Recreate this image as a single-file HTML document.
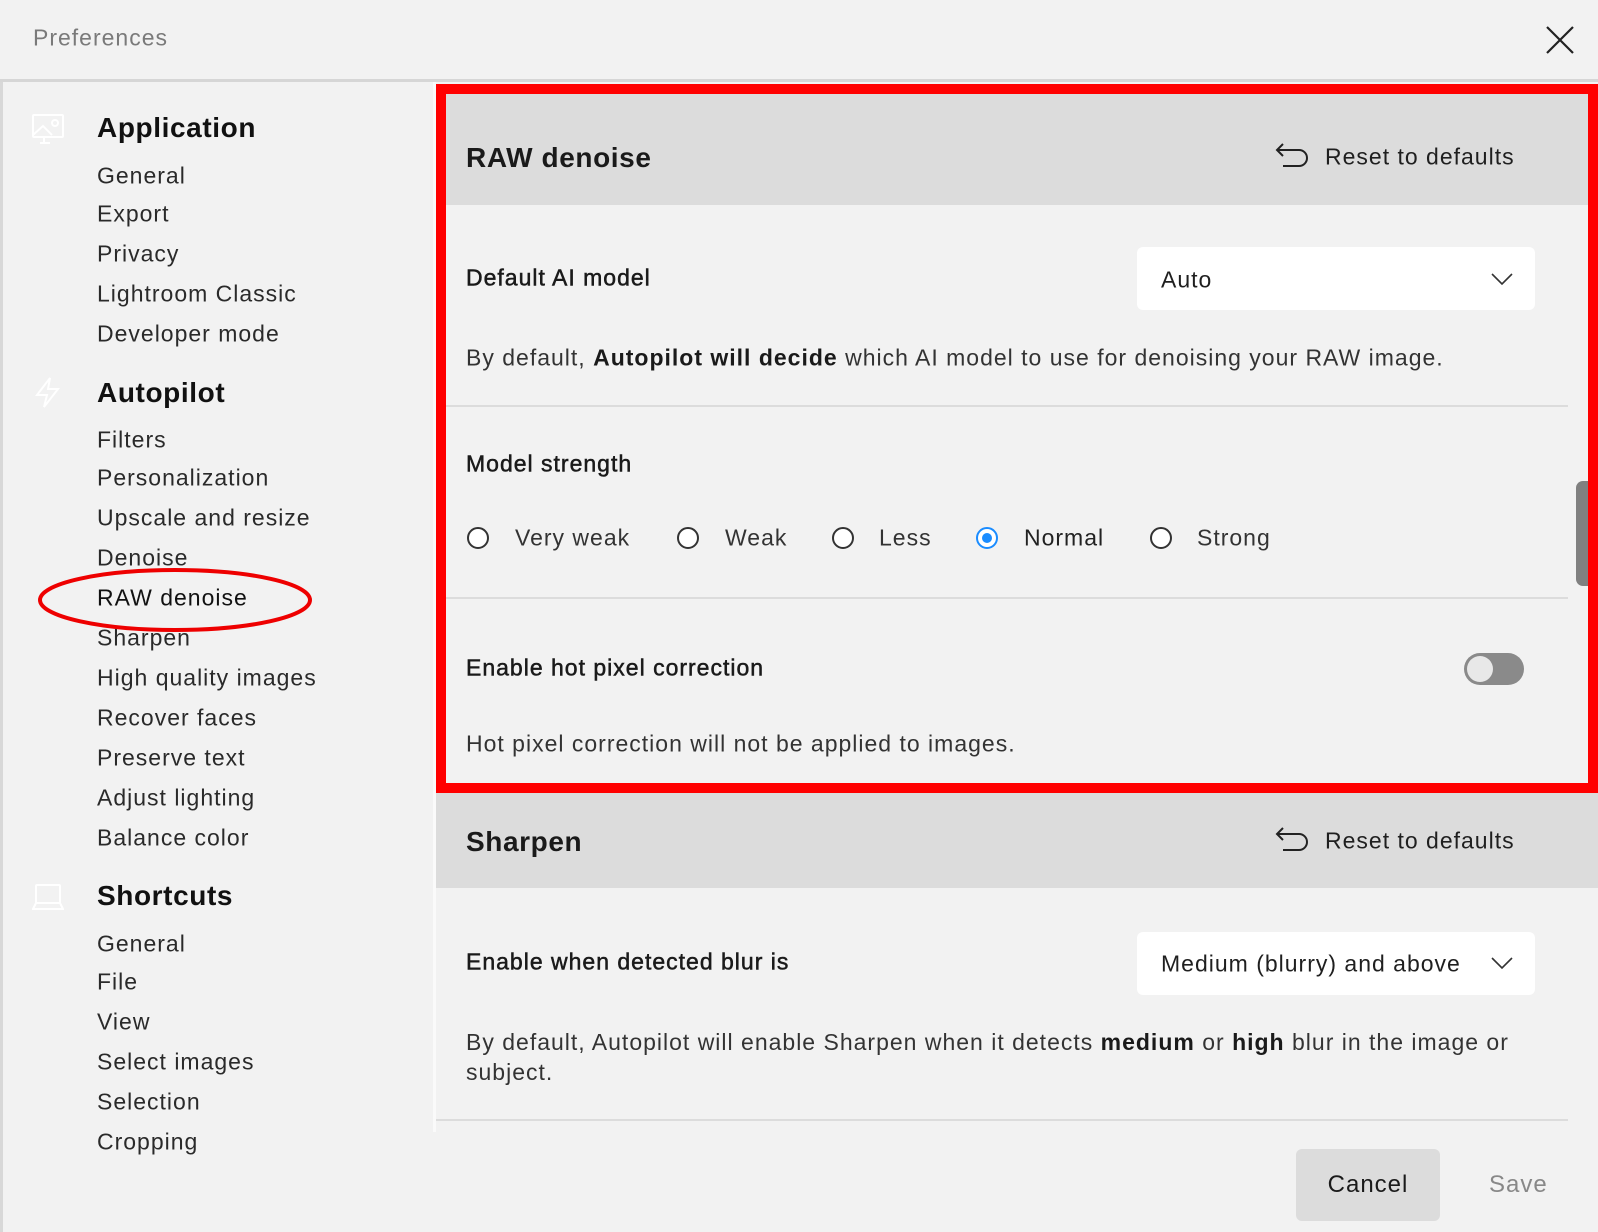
<!DOCTYPE html>
<html><head><meta charset="utf-8"><style>
*{margin:0;padding:0;box-sizing:border-box}
body{width:1598px;height:1232px;background:#f2f2f2;font-family:"Liberation Sans",sans-serif;color:#1f1f1f;position:relative;overflow:hidden;letter-spacing:1px}
.a{position:absolute;white-space:nowrap}
.t{transform:translateY(-50%)}
.side{font-size:23px;color:#2a2a2a;left:97px}
.h{font-size:28px;font-weight:bold;left:97px;color:#111;letter-spacing:0.6px}
.lab{font-size:23px;color:#1a1a1a;left:466px;-webkit-text-stroke:0.5px #1a1a1a}
.d{font-size:23px;color:#333;left:466px}
.sec{font-size:28px;font-weight:bold;color:#1a1a1a;letter-spacing:0.6px}
.rad{width:22px;height:22px;border:2px solid #333;border-radius:50%;background:#fff}
</style></head><body>
<div class="a t" style="left:33px;top:38px;font-size:23px;color:#7a7a7a">Preferences</div>
<svg class="a" style="left:1545px;top:25px" width="30" height="30"><path d="M2 2L28 28M28 2L2 28" stroke="#222" stroke-width="2.2"/></svg>
<div class="a" style="left:0;top:79px;width:1598px;height:3px;background:#d6d6d6"></div>
<div class="a" style="left:0;top:82px;width:3px;height:1150px;background:#d8d8d8"></div>
<div class="a" style="left:433px;top:82px;width:3px;height:1050px;background:#fafafa"></div>

<svg class="a" style="left:32px;top:114px" width="34" height="32" fill="none" stroke="#fff" stroke-width="2"><rect x="1" y="1" width="30" height="22" rx="1"/><circle cx="23" cy="9" r="3"/><path d="M1 21l10-9 9 9M12 23v5M8 29h10"/></svg>
<svg class="a" style="left:34px;top:376px" width="28" height="32" fill="none" stroke="#fff" stroke-width="2"><path d="M16 2L3 19h10l-3 12 14-18H14z"/></svg>
<svg class="a" style="left:32px;top:883px" width="32" height="28" fill="none" stroke="#fff" stroke-width="2"><rect x="4" y="2" width="24" height="18" rx="1"/><path d="M4 20L1 26h30l-3-6"/></svg>

<div class="a t h" style="top:128px">Application</div>
<div class="a t side" style="top:176px">General</div>
<div class="a t side" style="top:214px">Export</div>
<div class="a t side" style="top:254px">Privacy</div>
<div class="a t side" style="top:294px">Lightroom Classic</div>
<div class="a t side" style="top:334px">Developer mode</div>
<div class="a t h" style="top:393px">Autopilot</div>
<div class="a t side" style="top:440px">Filters</div>
<div class="a t side" style="top:478px">Personalization</div>
<div class="a t side" style="top:518px">Upscale and resize</div>
<div class="a t side" style="top:558px">Denoise</div>
<div class="a t side" style="top:598px;color:#111">RAW denoise</div>
<div class="a t side" style="top:638px">Sharpen</div>
<div class="a t side" style="top:678px">High quality images</div>
<div class="a t side" style="top:718px">Recover faces</div>
<div class="a t side" style="top:758px">Preserve text</div>
<div class="a t side" style="top:798px">Adjust lighting</div>
<div class="a t side" style="top:838px">Balance color</div>
<div class="a t h" style="top:896px">Shortcuts</div>
<div class="a t side" style="top:944px">General</div>
<div class="a t side" style="top:982px">File</div>
<div class="a t side" style="top:1022px">View</div>
<div class="a t side" style="top:1062px">Select images</div>
<div class="a t side" style="top:1102px">Selection</div>
<div class="a t side" style="top:1142px">Cropping</div>
<svg class="a" style="left:36px;top:566px" width="280" height="68"><ellipse cx="139" cy="34" rx="135" ry="30" fill="none" stroke="#e00" stroke-width="4"/></svg>

<!-- main -->
<div class="a" style="left:436px;top:94px;width:1152px;height:111px;background:#dcdcdc"></div>
<div class="a t sec" style="left:466px;top:158px">RAW denoise</div>
<svg class="a" style="left:1274px;top:142px" width="36" height="30" fill="none" stroke="#222" stroke-width="2"><path d="M3 8h22a8 8 0 0 1 0 16H9M9 2L3 8l6 6"/></svg>
<div class="a t" style="left:1325px;top:157px;font-size:23px">Reset to defaults</div>
<div class="a t lab" style="top:278px">Default AI model</div>
<div class="a" style="left:1137px;top:247px;width:398px;height:63px;background:#fff;border-radius:6px"></div>
<div class="a t" style="left:1161px;top:280px;font-size:23px">Auto</div>
<svg class="a" style="left:1490px;top:272px" width="24" height="14" fill="none" stroke="#333" stroke-width="1.6"><path d="M2 2l10 10 10-10"/></svg>
<div class="a t d" style="top:358px">By default, <b style="color:#1a1a1a">Autopilot will decide</b> which AI model to use for denoising your RAW image.</div>
<div class="a" style="left:446px;top:405px;width:1122px;height:2px;background:#dcdcdc"></div>
<div class="a t lab" style="top:464px">Model strength</div>
<div class="a rad" style="left:467px;top:527px"></div><div class="a t" style="left:515px;top:538px;font-size:23px;color:#333">Very weak</div>
<div class="a rad" style="left:677px;top:527px"></div><div class="a t" style="left:725px;top:538px;font-size:23px;color:#333">Weak</div>
<div class="a rad" style="left:832px;top:527px"></div><div class="a t" style="left:879px;top:538px;font-size:23px;color:#333">Less</div>
<div class="a rad" style="left:976px;top:527px;border-color:#1a8cff"><div style="width:10px;height:10px;border-radius:50%;background:#1a8cff;margin:4px"></div></div><div class="a t" style="left:1024px;top:538px;font-size:23px;color:#222">Normal</div>
<div class="a rad" style="left:1150px;top:527px"></div><div class="a t" style="left:1197px;top:538px;font-size:23px;color:#333">Strong</div>
<div class="a" style="left:446px;top:597px;width:1122px;height:2px;background:#dcdcdc"></div>
<div class="a t lab" style="top:668px">Enable hot pixel correction</div>
<div class="a" style="left:1464px;top:653px;width:60px;height:32px;border-radius:16px;background:#8a8a8a"><div style="width:26px;height:26px;border-radius:50%;background:#e8e8e8;margin:3px"></div></div>
<div class="a t d" style="top:744px">Hot pixel correction will not be applied to images.</div>
<div class="a" style="left:1576px;top:481px;width:14px;height:105px;background:#808080;border-radius:7px 0 0 7px"></div>
<div class="a" style="left:436px;top:84px;width:1162px;height:709px;border:10px solid #f00;border-right-width:10px"></div>

<div class="a" style="left:436px;top:793px;width:1162px;height:95px;background:#dcdcdc"></div>
<div class="a t sec" style="left:466px;top:842px">Sharpen</div>
<svg class="a" style="left:1274px;top:826px" width="36" height="30" fill="none" stroke="#222" stroke-width="2"><path d="M3 8h22a8 8 0 0 1 0 16H9M9 2L3 8l6 6"/></svg>
<div class="a t" style="left:1325px;top:841px;font-size:23px">Reset to defaults</div>
<div class="a t lab" style="top:962px">Enable when detected blur is</div>
<div class="a" style="left:1137px;top:932px;width:398px;height:63px;background:#fff;border-radius:6px"></div>
<div class="a t" style="left:1161px;top:964px;font-size:23px">Medium (blurry) and above</div>
<svg class="a" style="left:1490px;top:956px" width="24" height="14" fill="none" stroke="#333" stroke-width="1.6"><path d="M2 2l10 10 10-10"/></svg>
<div class="a d" style="top:1027px;white-space:normal;width:1080px;line-height:30px">By default, Autopilot will enable Sharpen when it detects <b style="color:#1a1a1a">medium</b> or <b style="color:#1a1a1a">high</b> blur in the image or<br>subject.</div>
<div class="a" style="left:436px;top:1119px;width:1132px;height:2px;background:#dcdcdc"></div>
<div class="a" style="left:1296px;top:1149px;width:144px;height:72px;background:#dcdcdc;border-radius:6px;font-size:24px;text-align:center;line-height:72px;color:#1a1a1a">Cancel</div>
<div class="a t" style="left:1489px;top:1185px;font-size:24px;color:#888">Save</div>
</body></html>
